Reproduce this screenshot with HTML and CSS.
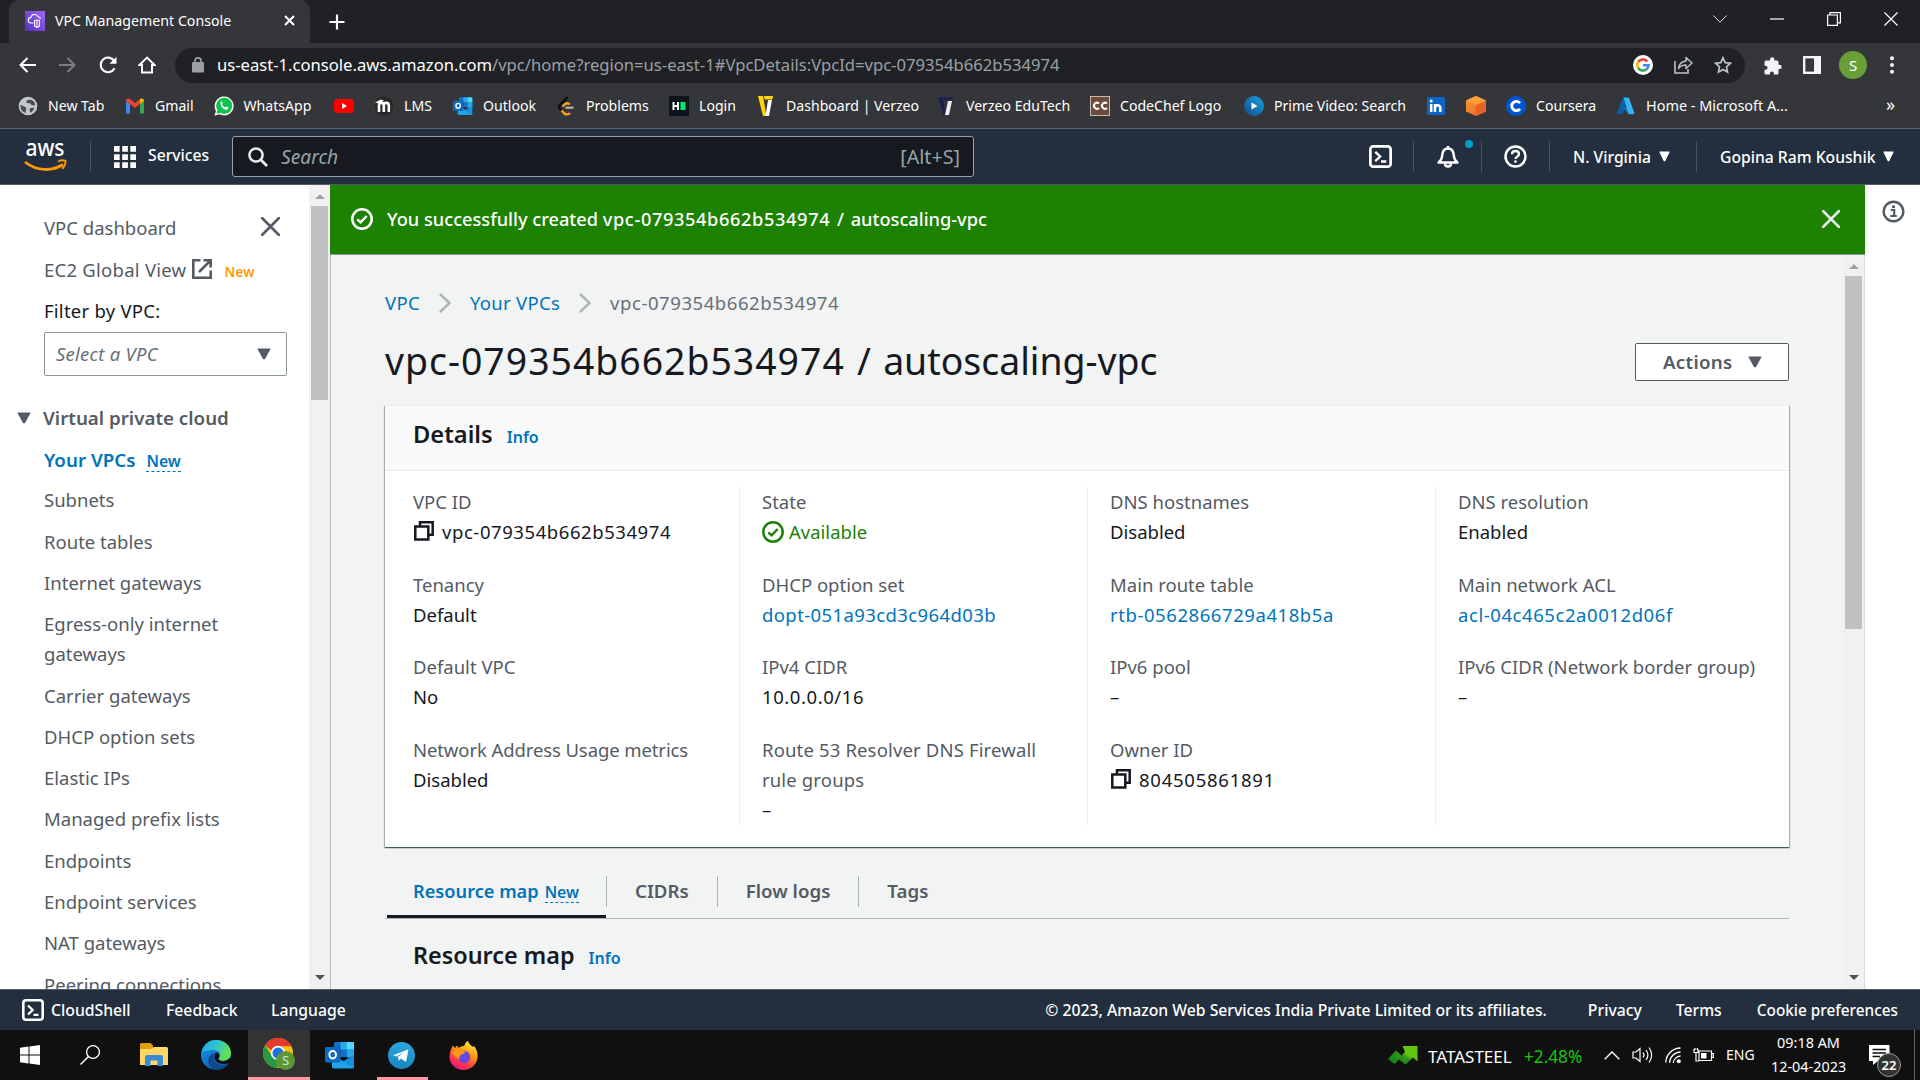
FILE: index.html
```html
<!DOCTYPE html>
<html lang="en">
<head>
<meta charset="utf-8">
<title>VPC Management Console</title>
<link rel="stylesheet" href="styles.css">
</head>
<body>
<svg class="defs" width="0" height="0">
  <defs>
    <linearGradient id="gPurple" x1="0" y1="1" x2="1" y2="0"><stop offset="0" stop-color="#5030b8"/><stop offset="1" stop-color="#a166ff"/></linearGradient>
    <linearGradient id="gEdge" x1="0" y1="0" x2="1" y2="0.3"><stop offset="0" stop-color="#1fa6ea"/><stop offset="0.55" stop-color="#2fc6c8"/><stop offset="1" stop-color="#66e04e"/></linearGradient>
    <linearGradient id="gEdge2" x1="0" y1="0" x2="0.6" y2="1"><stop offset="0" stop-color="#1b9be8"/><stop offset="1" stop-color="#0c5ac0"/></linearGradient>
    <linearGradient id="gFox" x1="0.8" y1="0" x2="0.3" y2="1"><stop offset="0" stop-color="#fff44f"/><stop offset="0.4" stop-color="#ff980e"/><stop offset="0.75" stop-color="#ff3647"/><stop offset="1" stop-color="#e31587"/></linearGradient>
    <linearGradient id="gTele" x1="0" y1="0" x2="0" y2="1"><stop offset="0" stop-color="#2aa6e0"/><stop offset="1" stop-color="#1a86c0"/></linearGradient>
    <linearGradient id="gCube" x1="0" y1="0" x2="1" y2="1"><stop offset="0" stop-color="#ff9a2e"/><stop offset="1" stop-color="#e8632a"/></linearGradient>
    <linearGradient id="gPrime" x1="1" y1="0" x2="0" y2="1"><stop offset="0" stop-color="#1aa3dc"/><stop offset="1" stop-color="#0c4d8c"/></linearGradient>
    <linearGradient id="gStock" x1="0" y1="1" x2="1" y2="0"><stop offset="0" stop-color="#0e7a1a"/><stop offset="0.5" stop-color="#2f9a1c"/><stop offset="0.6" stop-color="#62c610"/><stop offset="1" stop-color="#62c610"/></linearGradient>
    <symbol id="outlook" viewBox="0 0 30 28">
      <rect x="9" y="1" width="20" height="15" rx="1.500" fill="#1470c6"/><rect x="15.500" y="1" width="7" height="7.500" fill="#28a8ea"/><rect x="22" y="1" width="7" height="7.500" fill="#50d9ff"/><rect x="22" y="8.500" width="7" height="8" fill="#28a8ea"/><rect x="9" y="8.500" width="7" height="8" fill="#0a4a94"/>
      <path d="M7 14l11.500 6L29 14v12a1.500 1.500 0 0 1-1.500 1.500h-19A1.500 1.500 0 0 1 7 26z" fill="#1490df"/><path d="M7 14l22 13H8.500A1.500 1.500 0 0 1 7 26z" fill="#28a8ea" opacity=".75"/>
      <rect x="0" y="6" width="15.500" height="15.500" rx="1.500" fill="#0f6cbd"/><ellipse cx="7.700" cy="13.700" rx="3.300" ry="3.700" fill="none" stroke="#fff" stroke-width="2"/>
    </symbol>
    <symbol id="shell" viewBox="0 0 22 22"><rect x="1.300" y="1.300" width="19.400" height="19.400" rx="2.800" fill="none" stroke="#fff" stroke-width="2.600"/><path d="M6 6.500l4.700 4.500L6 15.500M11.500 15.800H16.500" fill="none" stroke="#fff" stroke-width="2.300"/></symbol>
    <symbol id="okay" viewBox="0 0 22 22"><circle cx="11" cy="11" r="9.700" fill="none" stroke="currentColor" stroke-width="2.500"/><path d="M6.300 11.300l3.300 3L15.700 8" fill="none" stroke="currentColor" stroke-width="2.500"/></symbol>
    <symbol id="copy" viewBox="0 0 20 20"><path d="M6 5.500V1.300h12.700v12.400H14.500" fill="none" stroke="#16191f" stroke-width="2.500"/><rect x="1.300" y="5.500" width="13" height="13" fill="none" stroke="#16191f" stroke-width="2.500"/></symbol>
    <symbol id="tri" viewBox="0 0 14 12"><path d="M1 .5h12a.5.5 0 0 1 .4.800L8.200 10.700a1.500 1.500 0 0 1-2.400 0L.6 1.300A.5.5 0 0 1 1 .5z" fill="currentColor"/></symbol>
    <symbol id="cross" viewBox="0 0 18 18"><path d="M1 1l16 16M17 1L1 17" fill="none" stroke="currentColor" stroke-width="2.500" stroke-linecap="round"/></symbol>
    <symbol id="sep" viewBox="0 0 12 20"><path d="M1 1l9.500 9L1 19" fill="none" stroke="#aab7b8" stroke-width="2.500"/></symbol>
  </defs>
</svg>

<header class="tabstrip">
  <div class="tab">
    <svg width="20" height="20" viewBox="0 0 20 20"><rect width="20" height="20" fill="url(#gPurple)"/><path d="M8.500 12H6.200a2.700 2.700 0 0 1-.4-5.400A3.800 3.800 0 0 1 13 5.700c1.500 0 2.300 1 2.400 2.200" fill="none" stroke="#fff" stroke-width="1.100"/><path d="M9.300 9.300h5.400M9.600 9.500v5.600l2.400 1.300 2.400-1.300V9.500M12 9.500v6" fill="none" stroke="#fff" stroke-width="1.100"/></svg>
    <span class="tab-title">VPC Management Console</span>
    <svg width="11" height="11" viewBox="0 0 11 11"><path d="M1 1l9 9M10 1l-9 9" stroke="#fff" stroke-width="2"/></svg>
  </div>
  <svg class="newtab" width="16" height="16" viewBox="0 0 16 16"><path d="M8 .5v15M.5 8h15" stroke="#fff" stroke-width="2.200"/></svg>
  <div class="win">
    <svg width="14" height="8" viewBox="0 0 14 8"><path d="M.5.5L7 7.200 13.500.5" fill="none" stroke="#ddd"/></svg>
    <svg width="14" height="2" viewBox="0 0 14 2"><path d="M0 1h14" stroke="#fff" stroke-width="1.200"/></svg>
    <svg width="14" height="14" viewBox="0 0 14 14"><path d="M.6 3h9.800v10.400H.6zM3 3V.6h10.400v10.200h-3" fill="none" stroke="#fff" stroke-width="1.200"/></svg>
    <svg width="14" height="14" viewBox="0 0 14 14"><path d="M.5.5l13 13M13.500.5l-13 13" stroke="#fff" stroke-width="1.200"/></svg>
  </div>
</header>

<nav class="toolbar">
  <svg width="17" height="16" viewBox="0 0 17 16"><path d="M17 8H1.500M8.500 1L1.500 8l7 7" fill="none" stroke="#fff" stroke-width="2"/></svg>
  <svg width="17" height="16" viewBox="0 0 17 16"><path d="M0 8h15.500M8.500 1l7 7-7 7" fill="none" stroke="#7b7d80" stroke-width="2"/></svg>
  <svg width="18" height="18" viewBox="0 0 18 18"><path d="M15.500 12.200A7.300 7.300 0 1 1 15.200 5" fill="none" stroke="#fff" stroke-width="2.100"/><path d="M17.500.8v7h-7z" fill="#fff"/></svg>
  <svg width="18" height="18" viewBox="0 0 18 18"><path d="M9 1.600L1.500 9H4v7.500h10V9h2.500z" fill="none" stroke="#fff" stroke-width="2"/></svg>
  <div class="omnibox">
    <svg class="lock" width="12" height="16" viewBox="0 0 12 16"><rect x="0" y="5" width="12" height="10.500" rx="1.200" fill="#9aa0a6"/><path d="M3 6V3.800a3 3 0 0 1 6 0V6" fill="none" stroke="#9aa0a6" stroke-width="1.700"/></svg>
    <span class="url"><b>us-east-1.console.aws.amazon.com</b>/vpc/home?region=us-east-1#VpcDetails:VpcId=vpc-079354b662b534974</span>
    <div class="omni-icons">
      <svg width="20" height="20" viewBox="0 0 20 20"><circle cx="10" cy="10" r="10" fill="#fff"/><g fill="none" stroke-width="2.600"><path d="M14.300 6.500A5.500 5.500 0 0 0 5.200 7.200" stroke="#ea4335"/><path d="M5.200 7.200a5.500 5.500 0 0 0 0 5.600" stroke="#fbbc05"/><path d="M5.200 12.800a5.500 5.500 0 0 0 8.300 1.400" stroke="#34a853"/><path d="M13.500 14.200a5.500 5.500 0 0 0 2-4H10" stroke="#4285f4"/></g></svg>
      <svg width="19" height="18" viewBox="0 0 19 18"><path d="M1 5v12h13v-4" fill="none" stroke="#bdc1c6" stroke-width="1.600"/><path d="M4.500 12.500c.5-4.500 3-7 7.500-7.500V1.500l6 5.500-6 5.500V9c-3.500 0-5.800 1-7.500 3.500z" fill="none" stroke="#bdc1c6" stroke-width="1.500" stroke-linejoin="round"/></svg>
      <svg width="18" height="18" viewBox="0 0 18 18"><path d="M9 1.800l2.200 4.800 5.200.6-3.900 3.600 1 5.200L9 13.400 4.500 16l1-5.200L1.600 7.200l5.200-.6z" fill="none" stroke="#bdc1c6" stroke-width="1.700"/></svg>
    </div>
  </div>
  <svg width="19" height="19" viewBox="0 0 19 19"><path d="M7 3.500a2.200 2.200 0 0 1 4.400 0V4.500H14A1.500 1.500 0 0 1 15.500 6v2.700h1a2.200 2.200 0 0 1 0 4.400h-1V17a1.500 1.500 0 0 1-1.500 1.500h-3.100v-1a2 2 0 0 0-4 0v1H3A1.500 1.500 0 0 1 1.500 17v-3.200h1a2 2 0 0 0 0-4h-1V6A1.500 1.500 0 0 1 3 4.500h4z" fill="#f1f3f4"/></svg>
  <svg width="18" height="18" viewBox="0 0 18 18"><rect x="1.200" y="1.200" width="15.600" height="15.600" fill="none" stroke="#f1f3f4" stroke-width="2.400"/><rect x="11" y="1" width="6" height="16" fill="#f1f3f4"/></svg>
  <span class="avatar">S</span>
  <svg width="4" height="18" viewBox="0 0 4 18" fill="#f1f3f4"><circle cx="2" cy="2.200" r="2"/><circle cx="2" cy="9" r="2"/><circle cx="2" cy="15.800" r="2"/></svg>
</nav>

<nav class="bookmarks">
  <a><svg width="20" height="20" viewBox="0 0 20 20"><circle cx="10" cy="10" r="9.300" fill="#c4c7cb"/><path d="M2.500 8.500c2 2 4.500 1.500 5.500 3.300.8 1.600-.8 2.200 0 5.200-3.500-.7-6-4-5.500-8.500zM11 3.500l-3 1.700 1 2 2.500-.3 2.500 2.300h3.200c-.2-3.200-2.500-5.500-6.200-5.700zM11.500 12.500l4.700-1c-.3 2.500-1.800 4.500-4 5.300z" fill="#4a4d51"/></svg>New Tab</a>
  <a><svg width="20" height="20" viewBox="0 0 20 20"><path d="M1 17.500V5l4 3v9.500z" fill="#4285f4"/><path d="M15 17.500V8l4-3v12.500z" fill="#34a853"/><path d="M1 5c0-2.500 2.500-3 4-2l5 4 5-4v5l-5 4-5-4-4-3z" fill="#ea4335"/><path d="M15 3c1.500-1 4-.5 4 2l-4 3z" fill="#fbbc04"/></svg>Gmail</a>
  <a><svg width="20" height="20" viewBox="0 0 20 20"><path d="M.5 19.700l1.400-5A9.500 9.500 0 1 1 5.600 18.300z" fill="#fff"/><path d="M2.500 17.700l1-3.600a8 8 0 1 1 2.700 2.600z" fill="#0fc24c"/><path d="M6.700 5.500c.8-.6 1.300-.2 1.500.4l.6 1.400-.8 1.300c.7 1.400 1.600 2.200 3 2.800l1.200-1 1.900.9c.5.400 0 1.700-.8 2.200-3 1.300-8-3.600-6.600-8z" fill="#fff"/></svg>WhatsApp</a>
  <a><svg width="20" height="20" viewBox="0 0 20 20"><rect y="3" width="20" height="14" rx="3.500" fill="#f00"/><path d="M8 7l5 3-5 3z" fill="#fff"/></svg></a>
  <a><svg width="20" height="20" viewBox="0 0 20 20"><circle cx="10" cy="10" r="9.500" fill="#2b2725"/><path d="M5 16V9.500c0-3.500 4.800-3.500 4.800 0V16M9.800 9.500c0-3.500 5-3.500 5 0V16" fill="none" stroke="#fff" stroke-width="2.600"/><path d="M1 6.500L7 3.500l3 1.200-5 2.800z" fill="#fff"/></svg>LMS</a>
  <a><svg width="20" height="20"><use href="#outlook"/></svg>Outlook</a>
  <a><svg width="20" height="20" viewBox="0 0 20 20"><path d="M11.500 1L4 9c-1.200 1.300-1.200 2.800 0 4l3 3" fill="none" stroke="#0b0b0b" stroke-width="2.400"/><path d="M13.500 8.500c-1.500-1.700-3.500-1.700-5 0L6.500 10.500M5.500 14.500L8.500 17.500c1.500 1.300 4 1.300 5.500-.5" fill="none" stroke="#ffa116" stroke-width="2.400"/><path d="M9.500 11.700h8" stroke="#b3b3b3" stroke-width="2.200"/></svg>Problems</a>
  <a><svg width="20" height="20" viewBox="0 0 20 20"><rect width="20" height="20" fill="#0e141e"/><path d="M4.500 6v8M9 6v8M4 10h5" stroke="#fff" stroke-width="2"/><rect x="11.500" y="6" width="5" height="8" fill="#00ea64"/></svg>Login</a>
  <a><svg width="20" height="20" viewBox="0 0 20 20"><path d="M2 0h5l3.500 20H7z" fill="#ffd400"/><path d="M8 0h9l-.6 3.500H8.500z" fill="#ffd400"/><path d="M12 4h4l-3 16H9.500z" fill="#fff"/></svg>Dashboard | Verzeo</a>
  <a><svg width="20" height="20" viewBox="0 0 20 20"><path d="M2 1h5l3 18H7.500z" fill="#1d2250"/><path d="M8 1h9l-.6 3.500H8.500z" fill="#1d2250"/><path d="M12 5h4l-3 14H9z" fill="#f1f1f5"/></svg>Verzeo EduTech</a>
  <a><svg width="20" height="20" viewBox="0 0 20 20"><rect x=".5" y=".5" width="19" height="19" fill="#6b4c3b" stroke="#cbb9ab"/><path d="M9 7.500a3 3 0 1 0 0 4.500M17 7.500a3 3 0 1 0 0 4.500" fill="none" stroke="#fff" stroke-width="2"/></svg>CodeChef Logo</a>
  <a><svg width="20" height="20" viewBox="0 0 20 20"><circle cx="10" cy="10" r="10" fill="url(#gPrime)"/><path d="M7.500 6.500l6 3.500-6 3.500z" fill="#fff"/></svg>Prime Video: Search</a>
  <a><svg width="20" height="20" viewBox="0 0 20 20"><rect x="1" y="1" width="18" height="18" rx="1" fill="#0a66c2"/><path d="M5.200 8v8M9 8v8M9 12c0-3.500 5.300-4 5.300 0v4" fill="none" stroke="#fff" stroke-width="2.500"/><circle cx="5.200" cy="5" r="1.500" fill="#fff"/></svg></a>
  <a><svg width="20" height="20" viewBox="0 0 20 20"><path d="M10 0l10 4.500v11L10 20 0 15.500v-11z" fill="url(#gCube)"/><path d="M10 9l10-4.500v11L10 20z" fill="#e8632a"/><path d="M10 0l10 4.500L10 9 0 4.500z" fill="#ff9e36"/></svg></a>
  <a><svg width="20" height="20" viewBox="0 0 20 20"><circle cx="10" cy="10" r="10" fill="#0056d2"/><path d="M14 7.200a4.600 4.600 0 1 0 0 5.600" fill="none" stroke="#fff" stroke-width="2.900"/></svg>Coursera</a>
  <a class="azure"><svg width="20" height="20" viewBox="0 0 20 20"><path d="M7 1.500h5L6.500 18H2.200A1 1 0 0 1 1 16.500z" fill="#0f5ea8"/><path d="M7 11.500h8v6.700h-2z" fill="#0a78d4"/><path d="M7.500 1.500H12c.7 0 1 .5 1.200 1l5 14c.3 1-.2 1.700-1 1.700H12.700z" fill="#35b3ee"/></svg>Home - Microsoft A...</a>
  <a class="more">»</a>
</nav>

<header class="aws">
  <svg class="logo" width="44" height="38" viewBox="0 -4 44 38"><text class="logo-text" x="1.500" y="16" textLength="39" lengthAdjust="spacingAndGlyphs">aws</text><path d="M1 22c12 9.500 27 9.500 38 2.500" fill="none" stroke="#f90" stroke-width="2.800"/><path d="M34 21.500c3-1.500 6-1.300 7.500-.7.300 3-1.200 6-3.500 8" fill="none" stroke="#f90" stroke-width="1.900"/></svg>
  <i class="rule"></i>
  <svg class="grid9" width="22" height="22" viewBox="0 0 22 22" fill="#fff"><path d="M0 0h5.700v5.700H0zM8.200 0h5.700v5.700H8.200zM16.300 0H22v5.700h-5.700zM0 8.200h5.700v5.700H0zM8.200 8.200h5.700v5.700H8.200zM16.300 8.200H22v5.700h-5.700zM0 16.300h5.700V22H0zM8.200 16.300h5.700V22H8.200zM16.300 16.300H22V22h-5.700z"/></svg>
  <span class="services">Services</span>
  <div class="search">
    <svg width="20" height="20" viewBox="0 0 20 20"><circle cx="8" cy="8" r="6.600" fill="none" stroke="#eaeded" stroke-width="2.500"/><path d="M12.800 12.800L19 19" stroke="#eaeded" stroke-width="2.800"/></svg>
    <em>Search</em><span>[Alt+S]</span>
  </div>
  <div class="aws-right">
    <a class="c1"><svg width="23" height="23"><use href="#shell"/></svg></a>
    <a class="c2"><svg width="24" height="24" viewBox="0 0 24 24"><path d="M2.500 17.500c3-2.500 3.500-4 3.700-7C6.500 6 9 3.500 12 3.500S17.500 6 17.800 10.500c.2 3 .7 4.500 3.700 7z" fill="none" stroke="#fff" stroke-width="2.400" stroke-linejoin="round"/><path d="M12 1v3M9 18.500c0 4 6 4 6 0" fill="none" stroke="#fff" stroke-width="2.400"/></svg><i class="dot"></i></a>
    <a class="c3"><svg width="23" height="23" viewBox="0 0 23 23"><circle cx="11.500" cy="11.500" r="10" fill="none" stroke="#fff" stroke-width="2.500"/><path d="M8 9.200c0-4.300 7-4.300 7 0 0 2.300-3.500 2.300-3.500 4.800" fill="none" stroke="#fff" stroke-width="2.300"/><circle cx="11.500" cy="16.600" r="1.400" fill="#fff"/></svg></a>
    <a class="c4">N. Virginia<svg width="11" height="11" viewBox="0 0 14 12" preserveAspectRatio="none"><use href="#tri"/></svg></a>
    <a class="c5">Gopina Ram Koushik<svg width="11" height="11" viewBox="0 0 14 12" preserveAspectRatio="none"><use href="#tri"/></svg></a>
  </div>
</header>

<div class="workspace">
  <aside class="side">
    <div class="side-body">
      <a class="row">VPC dashboard<svg class="close" width="19" height="19"><use href="#cross"/></svg></a>
      <a class="global">EC2 Global View<svg class="ext" width="20" height="20" viewBox="0 0 20 20"><path d="M8.500 1.300H1.300v17.400h17.400V11.500" fill="none" stroke="#545b64" stroke-width="2.600"/><path d="M11.500 1.300h7.200v7.200M18.500 1.500L7 13" fill="none" stroke="#545b64" stroke-width="2.600"/></svg><b class="new-o">New</b></a>
      <div class="filter">Filter by VPC:</div>
      <div class="select"><em>Select a VPC</em><svg width="14" height="12"><use href="#tri"/></svg></div>
      <div class="group"><svg width="14" height="12"><use href="#tri"/></svg>Virtual private cloud</div>
      <a class="current">Your VPCs<span class="new-b">New</span></a>
      <a>Subnets</a>
      <a>Route tables</a>
      <a>Internet gateways</a>
      <a>Egress-only internet gateways</a>
      <a>Carrier gateways</a>
      <a>DHCP option sets</a>
      <a>Elastic IPs</a>
      <a>Managed prefix lists</a>
      <a>Endpoints</a>
      <a>Endpoint services</a>
      <a>NAT gateways</a>
      <a>Peering connections</a>
    </div>
    <div class="scroll"><i class="up"></i><i class="thumb t1"></i><i class="down"></i></div>
  </aside>

  <main class="main">
    <div class="flash"><svg width="22" height="22"><use href="#okay"/></svg><p>You successfully created <span class="id">vpc-079354b662b534974</span><span class="tail"> / autoscaling-vpc</span></p><svg class="flash-x" width="18" height="18"><use href="#cross"/></svg></div>
    <div class="main-scroll">
      <div class="content">
        <div class="crumbs"><a>VPC</a><svg width="12" height="20"><use href="#sep"/></svg><a>Your VPCs</a><svg width="12" height="20"><use href="#sep"/></svg><span class="id">vpc-079354b662b534974</span></div>
        <div class="head"><h1><span>vpc-079354b662b534974</span> / autoscaling-vpc</h1><button class="actions">Actions<svg width="14" height="12"><use href="#tri"/></svg></button></div>
        <section class="card">
          <div class="card-head"><h2>Details</h2><a class="info">Info</a></div>
          <div class="cols">
            <dl>
              <div><dt>VPC ID</dt><dd class="id"><svg width="20" height="20"><use href="#copy"/></svg>vpc-079354b662b534974</dd></div>
              <div><dt>Tenancy</dt><dd>Default</dd></div>
              <div><dt>Default VPC</dt><dd>No</dd></div>
              <div><dt class="snug">Network Address Usage metrics</dt><dd>Disabled</dd></div>
            </dl>
            <dl>
              <div><dt>State</dt><dd class="ok"><svg width="22" height="22"><use href="#okay"/></svg>Available</dd></div>
              <div><dt>DHCP option set</dt><dd class="id dopt"><a>dopt-051a93cd3c964d03b</a></dd></div>
              <div><dt>IPv4 CIDR</dt><dd class="id">10.0.0.0/16</dd></div>
              <div><dt class="loose">Route 53 Resolver DNS Firewall<br>rule groups</dt><dd>–</dd></div>
            </dl>
            <dl>
              <div><dt>DNS hostnames</dt><dd>Disabled</dd></div>
              <div><dt>Main route table</dt><dd class="id"><a>rtb-0562866729a418b5a</a></dd></div>
              <div><dt>IPv6 pool</dt><dd>–</dd></div>
              <div><dt>Owner ID</dt><dd class="id owner"><svg width="20" height="20"><use href="#copy"/></svg>804505861891</dd></div>
            </dl>
            <dl>
              <div><dt>DNS resolution</dt><dd>Enabled</dd></div>
              <div><dt>Main network ACL</dt><dd class="id"><a>acl-04c465c2a0012d06f</a></dd></div>
              <div><dt>IPv6 CIDR (Network border group)</dt><dd>–</dd></div>
            </dl>
          </div>
        </section>
        <div class="tabs">
          <a class="on">Resource map<span class="new-b">New</span></a><a>CIDRs</a><a>Flow logs</a><a>Tags</a>
        </div>
        <div class="map-head"><h2>Resource map</h2><a class="info">Info</a></div>
      </div>
      <div class="scroll"><i class="up"></i><i class="thumb t2"></i><i class="down"></i></div>
    </div>
  </main>

  <aside class="help"><svg width="23" height="23" viewBox="0 0 23 23"><circle cx="11.500" cy="11.500" r="9.800" fill="none" stroke="#545b64" stroke-width="2.400"/><path d="M8.700 10h3.500v5.500M8.300 16h6.500" fill="none" stroke="#545b64" stroke-width="2.200"/><rect x="10" y="5.500" width="3" height="2.600" fill="#545b64"/></svg></aside>
</div>

<footer class="foot">
  <svg width="22" height="22"><use href="#shell"/></svg>
  <span class="f1">CloudShell</span><span class="f2">Feedback</span><span class="f3">Language</span>
  <span class="copyr">© 2023, Amazon Web Services India Private Limited or its affiliates.</span>
  <span class="f4">Privacy</span><span class="f5">Terms</span><span class="f6">Cookie preferences</span>
</footer>

<div class="taskbar">
  <span class="task"><svg width="20" height="20" viewBox="0 0 20 20" fill="#fff"><path d="M0 2.800L8.500 1.600V9.500H0zM9.500 1.500L20 0v9.500H9.500zM0 10.500h8.500v7.900L0 17.200zM9.500 10.500H20V20L9.500 18.500z"/></svg></span>
  <span class="task"><svg width="20" height="20" viewBox="0 0 20 20"><circle cx="13" cy="7" r="6.400" fill="none" stroke="#fff" stroke-width="1.300"/><path d="M8.500 11.500L.5 19.500" stroke="#fff" stroke-width="1.400"/></svg></span>
  <span class="task"><svg width="28" height="24" viewBox="0 0 28 24"><path d="M0 1.500A1.500 1.500 0 0 1 1.500 0h9L13 2.500V8H0z" fill="#e09f00"/><path d="M0 6h11l3-2h12.500A1.500 1.500 0 0 1 28 5.500V22H0z" fill="#ffd766"/><path d="M5 23v-9a2 2 0 0 1 2-2h14a2 2 0 0 1 2 2v9h-5.500v-5.500h-7V23z" fill="#3a8ad8"/></svg></span>
  <span class="task"><svg width="30" height="30" viewBox="0 0 30 30"><circle cx="15" cy="15" r="15" fill="url(#gEdge2)"/><path d="M.5 12.500C2 4.500 8.500 0 15 0c9 0 15 6 15 13 0 5-3.500 8-8 8-3.500 0-5.500-1.500-4-3.500 3-4-1-8-6-7.500C6.500 10 2 12 .5 12.500z" fill="url(#gEdge)"/><path d="M15 30c-5.500-1-8.500-6-7.500-11 .7-3.300 3.500-5.500 6.500-6.500-3 4.500-1 12 7 12.500 3 .2 5-.8 6.500-1.800C25.500 27 21 30.500 15 30z" fill="#114a8b"/><path d="M15.500 12.500c2.800.7 3.700 3 2.500 5-1.500 2 .5 3.500 4 3.500 2.500 0 5-1 6.500-3l2 1-1.500 4.500h-1.800c-7 1.500-14.200-.7-13.700-7.200.1-1.700.8-3 2-3.800z" fill="#101010"/></svg></span>
  <span class="task active"><svg width="32" height="32" viewBox="0 0 32 32"><circle cx="15" cy="15" r="15" fill="#fbc116"/><path d="M2 7.500A15 15 0 0 1 28.500 8.300H15a7 7 0 0 0-6.500 4.200z" fill="#e33b2e"/><path d="M2 7.500A15 15 0 0 0 14 30l6.500-11-11-.5z" fill="#249a41"/><circle cx="15" cy="15" r="7.200" fill="#fff"/><circle cx="15" cy="15" r="5.500" fill="#1a73e8"/><circle cx="22.500" cy="22.500" r="9.500" fill="#5d9634"/><text class="s-badge" x="22.500" y="27" text-anchor="middle">S</text></svg></span>
  <span class="task"><svg width="30" height="28"><use href="#outlook"/></svg></span>
  <span class="task under"><svg width="27" height="27" viewBox="0 0 27 27"><circle cx="13.500" cy="13.500" r="13.500" fill="url(#gTele)"/><path d="M5 13.300L20.500 7.200 18 20l-5-3.500-2.300 2.300-.7-4 6.500-5.300-8 5z" fill="#fff"/></svg></span>
  <span class="task"><svg width="29" height="29" viewBox="0 0 29 29"><path d="M15.500 4.500C16 2 17.500.5 19 0c.5 3 3 4.500 5 6l1-1c3 3.500 4 7.500 3.500 12C27.500 24 21.500 29 14.500 29 6.500 29 .5 23 .5 15.500c0-4 1.500-7.500 3.500-11L6 7l2-2.500L9.500 7c2-1.500 4-2 6-2.500z" fill="url(#gFox)"/><circle cx="15" cy="16" r="6.200" fill="#6b46e0"/><path d="M2.500 12c3-3 6.500-4 9.500-3l4.500 2c-1 2-4 2-5.500 3.500-1 1.500-.5 2.500 0 4C7.500 17 5 14 2.500 12z" fill="#ff9a1a"/></svg></span>
  <div class="tray">
    <svg width="30" height="20" viewBox="0 0 30 20"><path d="M0 14l8-8.500 5.500 5L17 7l-2.500-6H29.500v15.500l-4.500-4-7.500 7-6.500-5-4.500 4.500z" fill="url(#gStock)"/></svg>
    <span class="tata">TATASTEEL</span><span class="pct">+2.48%</span>
    <svg class="y1" width="16" height="9" viewBox="0 0 16 9"><path d="M.7 8.300L8 1l7.300 7.300" fill="none" stroke="#fff" stroke-width="1.400"/></svg>
    <svg class="y2" width="21" height="18" viewBox="0 0 21 18"><path d="M1 6h3l4-3.500v13L4 12H1zM11 6.500c1.200 1.500 1.200 3.500 0 5M14 4c2.300 3 2.300 7 0 10M17 1.500c3.500 4.500 3.500 10.500 0 15" fill="none" stroke="#fff" stroke-width="1.200"/></svg>
    <svg class="y3" width="17" height="17" viewBox="0 0 17 17"><path d="M.8 15.500A15 15 0 0 1 15.500 1M4.500 15.800A11.300 11.300 0 0 1 15.500 5M8.300 16A7.500 7.500 0 0 1 15.500 9" fill="none" stroke="#fff" stroke-width="1.300"/><circle cx="13.800" cy="14.300" r="2" fill="#fff"/></svg>
    <svg class="y4" width="21" height="15" viewBox="0 0 21 15"><path d="M6 3h12.500v9.500H6zM18.500 5.500h1.800v4h-1.800M1 1v3.500h4V1M2 0v2M4.300 0v2M3 5v8h3" fill="none" stroke="#fff" stroke-width="1.200"/><rect x="8" y="5" width="5.500" height="5.500" fill="#fff"/></svg>
    <span class="eng">ENG</span>
    <span class="clock">09:18 AM<br>12-04-2023</span>
    <span class="note"><svg width="21" height="20" viewBox="0 0 21 20"><path d="M0 0h20.500v16H9l-5 4v-4H0z" fill="#fff"/><path d="M3.500 4.500H17M3.500 8H17M3.500 11.500H11" stroke="#111" stroke-width="1.300"/></svg><b>22</b></span>
  </div>
</div>
</body>
</html>
```
FILE: styles.css
```css
* { box-sizing: border-box; }
body {
  margin: 0;
  width: 1920px;
  height: 1080px;
  overflow: hidden;
  display: grid;
  grid-template-rows: 43px 44px 42px 56px 804px 41px 50px;
  font-family: "Noto Sans", "Open Sans", sans-serif;
  font-size: 18.5px;
  line-height: 30px;
  color: #16191f;
}
svg { display: block; flex: none; }
.defs { position: absolute; }
h1, h2, p, dl, dd, dt { margin: 0; font-weight: 400; }

/* Browser tabs */
.tabstrip { background: #202124; display: flex; align-items: center; padding-left: 9px; color: #fff; }
.tab { width: 301px; height: 43px; background: #35363a; border-radius: 10px 10px 0 0; display: flex; align-items: center; padding: 0 15px 2px 16px; }
.tab-title { font-size: 14.2px; margin-left: 10px; flex: 1; }
.newtab { margin-left: 19px; }
.win { margin-left: auto; display: flex; align-items: center; gap: 43px; padding: 0 22px 6px 0; }

/* Navigation bar */
.toolbar { background: #35363a; display: grid; grid-template-columns: 40px 40px 39px 37px 1588px 40px 36px 51px 4px; align-items: center; padding-left: 19px; }
.omnibox { height: 35px; width: 1570px; border-radius: 18px; background: #202124; display: flex; align-items: center; padding: 0 13px 0 17px; }
.url { margin-left: 13px; font-size: 16.63px; color: #9aa0a6; white-space: nowrap; }
.url b { font-weight: 400; color: #fff; }
.omni-icons { margin-left: auto; display: flex; gap: 21px; align-items: center; }
.avatar { width: 28px; height: 28px; border-radius: 50%; background: #689f38; color: #fff; font-size: 15px; line-height: 28px; text-align: center; }

/* Bookmarks bar */
.bookmarks { background: #35363a; border-bottom: 1px solid #5f6368; display: grid; grid-template-columns: 107px 88.5px 120.5px 40px 79px 103px 113px 87px 180px 154px 154px 182px 40px 40px 110px 270px 20px; padding: 0 0 4px 18px; align-items: center; color: #fff; font-size: 14.1px; white-space: nowrap; line-height: 20px; }
.bookmarks a { display: flex; align-items: center; gap: 10px; }
.bookmarks .azure { font-size: 14.45px; }
.bookmarks .more { font-size: 18px; padding-bottom: 4px; }

/* Console header */
.aws { background: #232f3e; border-bottom: 1px solid #545b64; display: flex; align-items: center; color: #fff; font-weight: 500; font-size: 15.7px; }
.logo { margin: -4px 0 0 24px; overflow: visible; }
.logo-text { font: 500 24px "Noto Sans", sans-serif; fill: #fff; }
.rule { width: 1px; height: 31px; background: #47525f; margin-left: 22px; }
.grid9 { margin-left: 23px; }
.services { margin: 0 0 3px 12px; width: 84px; }
.search { width: 742px; height: 41px; border: 1px solid #95a5a6; border-radius: 3px; background: #161920; display: flex; align-items: center; gap: 13px; padding: 0 13px 0 15px; font-size: 19.2px; font-weight: 400; color: #95a5a6; }
.search span { margin-left: auto; font-size: 19.7px; }
.aws-right { margin-left: auto; display: grid; grid-template-columns: 67px 68px 68px 147px 224px; align-items: center; }
.aws-right a { height: 31px; display: flex; align-items: center; border-left: 1px solid #47525f; position: relative; }
.aws-right .c1 { border: 0; padding-left: 23px; }
.c2, .c3 { padding-left: 22px; }
.c4 { padding-left: 23px; gap: 8px; }
.c5 { padding-left: 23px; gap: 8px; }
.dot { position: absolute; left: 51px; top: -1px; width: 8px; height: 8px; border-radius: 50%; background: #00a1c9; }

/* Side navigation */
.workspace { display: grid; grid-template-columns: 330px 1535px 55px; min-height: 0; }
.side { background: #fff; display: flex; overflow: hidden; min-height: 0; }
.side-body { width: 309px; padding: 28px 22px 0 44px; color: #545b64; overflow: hidden; }
.side-body a { display: block; margin-bottom: 11.3px; padding-right: 20px; }
.side-body .row { display: flex; justify-content: space-between; padding-right: 7px; margin-bottom: 10.5px; }
.side-body .global { display: flex; align-items: center; letter-spacing: 0.25px; padding: 0; }
.close { margin-top: 4px; }
.ext { margin: -2px 0 0 6px; }
.new-o { color: #ff9900; font-size: 13.6px; font-weight: 600; margin: 3px 0 0 12px; }
.filter { color: #16191f; letter-spacing: 0.25px; margin-top: -13px; padding-top: 0; }
.side-body .global + .filter { margin-top: -2px; }
.select { height: 44px; margin: 6px 0 27px; border: 1px solid #879596; border-radius: 2px; display: flex; align-items: center; justify-content: space-between; padding: 0 15px 0 11px; white-space: nowrap; letter-spacing: 0.25px; }
.select em { color: #687078; }
.group { font-weight: 600; font-size: 18.75px; margin: 0 0 12px -27px; display: flex; align-items: center; gap: 12px; white-space: nowrap; }
.side-body .current { color: #0073bb; font-weight: 600; font-size: 18.75px; margin-bottom: 10.6px; }
.new-b { color: #0073bb; font-size: 15.7px; font-weight: 600; line-height: 20px; margin-left: 11px; border-bottom: 1px dashed #0073bb; display: inline-block; }

.scroll { width: 21px; background: #f1f1f1; display: flex; flex-direction: column; align-items: center; padding: 9px 0 9px; }
.up, .down { border: 5px solid transparent; height: 0; width: 0; }
.up { border-top: 0; border-bottom-color: #a3a3a3; }
.down { border-bottom: 0; border-top-color: #505050; margin-top: auto; }
.thumb { width: 17px; background: #c1c1c1; margin-top: 7px; }
.t1 { height: 194px; }
.t2 { height: 353px; }

/* Main panel */
.main { background: #f2f3f3; display: flex; flex-direction: column; min-height: 0; overflow: hidden; }
.flash { height: 70px; flex: none; background: #1d8102; color: #fff; border-bottom: 1px solid #879596; display: flex; align-items: center; padding: 0 25px 1px 21px; font-size: 18.2px; gap: 14px; }
.flash p { font-weight: 500; white-space: pre; }
.flash .id { letter-spacing: 0.63px; }
.tail { word-spacing: 2px; }
.flash-x { margin-left: auto; color: #e9ebed; }
.main-scroll { display: flex; flex: 1; min-height: 0; border-left: 1px solid #b5bcbe; border-right: 1px solid #d5dbdb; }
.content { flex: 1; padding: 33px 54px 0 54px; overflow: hidden; }
.content a { color: #0073bb; }
.crumbs { display: flex; align-items: center; color: #687078; }
.crumbs a { letter-spacing: 0.3px; }
.crumbs svg { margin: 0 19px 0 19px; }
.id { letter-spacing: 0.57px; }
.dopt { letter-spacing: 0.4px; }
.owner { letter-spacing: 0.75px; }
.head { display: flex; justify-content: space-between; align-items: center; height: 50px; margin-top: 19px; }
h1 { font-size: 37.4px; line-height: 50px; white-space: nowrap; word-spacing: 2.5px; margin-top: -3px; }
h1 span { letter-spacing: 1px; }
.actions { width: 154px; height: 38px; border: 1px solid #545b64; border-radius: 2px; background: #fff; font: 600 18.7px "Noto Sans", sans-serif; letter-spacing: 0.3px; color: #545b64; display: flex; align-items: center; gap: 15px; padding: 0 0 1px 27px; }
.card { margin-top: 18px; height: 442px; background: #fff; border-top: 1px solid #eaeded; box-shadow: 0 1px 1px 0 rgba(0,28,36,.5), 1px 1px 1px 0 rgba(0,28,36,.25), -1px 1px 1px 0 rgba(0,28,36,.25); }
.card-head, .map-head { display: flex; align-items: baseline; gap: 14px; padding: 13px 28px 0; }
.card-head { height: 65px; background: #fafafa; border-bottom: 1px solid #eaeded; }
h2 { font-size: 23.4px; font-weight: 600; }
.card-head h2 { font-size: 23.7px; }
.info { font-size: 16px; font-weight: 600; }
.cols { display: grid; grid-template-columns: 354px 348px 348px 1fr; padding: 16px 0 0; height: 355px; }
dl { border-left: 1px solid #eaeded; padding-left: 22px; display: flex; flex-direction: column; gap: 22.5px; white-space: nowrap; height: 338px; }
dl:first-child { border: 0; padding-left: 28px; }
dt { color: #545b64; }
.snug { letter-spacing: -0.1px; }
.loose { letter-spacing: 0.15px; }
dd { display: flex; align-items: center; }
dd svg { margin: -2px 8px 0 1px; }
.ok { color: #1d8102; }
.ok svg { margin: 0 5px 0 0; }
.tabs { margin-top: 21px; height: 51px; border-bottom: 1px solid #aab7b8; display: flex; padding-left: 2px; font-weight: 600; font-size: 18.7px; }
.tabs a { height: 31px; margin-top: 8px; padding: 0 28px 0 28px; border-left: 1px solid #aab7b8; color: #545b64; white-space: nowrap; }
.tabs .on { height: 50px; width: 219px; font-size: 18.2px; margin-top: 0; padding: 8px 0 0 26px; border-left: 0; border-bottom: 3px solid #16191f; color: #0073bb; }
.tabs .new-b { margin-left: 6px; }
.map-head { padding-top: 21px; }
.help { background: #fff; padding: 15px 0 0 17px; }

/* Console footer */
.foot { background: #232f3e; border-top: 1px solid #545b64; color: #fff; display: flex; align-items: center; padding: 0 22px; font-size: 15.75px; font-weight: 500; white-space: nowrap; }
.f1 { margin-left: 7px; width: 115px; }
.f2 { width: 105px; }
.copyr { margin-left: auto; }
.f4 { margin-left: 41px; }
.f5 { margin-left: 34px; }
.f6 { margin-left: 35px; font-size: 15.35px; }

/* Taskbar */
.taskbar { background: #101010; color: #fff; display: flex; }
.task { width: 62px; display: flex; align-items: center; justify-content: center; height: 50px; }
.task:first-child { width: 60px; }
.task:nth-child(2) { width: 60px; }
.task:nth-child(3) { width: 66px; padding-left: 2px; }
.task:nth-child(4) { padding-right: 2px; }
.active { background: #333; border-bottom: 3px solid #ff99a4; }
.under { border-bottom: 3px solid #ff99a4; width: 51px; margin: 0 5px; padding: 3px 2px 0 0; }
.task:nth-child(6), .task:nth-child(8) { padding-right: 2px; }
.s-badge { font: 13px "Noto Sans", sans-serif; fill: #d9e6cf; }
.tray { margin-left: auto; display: flex; align-items: center; white-space: nowrap; }
.tata { font-size: 17px; width: 96px; margin-left: 10px; padding-top: 3px; }
.pct { font-size: 17.2px; color: #16c60c; width: 80px; padding-top: 3px; }
.y2 { margin-left: 12px; }
.y3 { margin-left: 12px; }
.y4 { margin-left: 11px; }
.eng { font-size: 14px; width: 45px; margin-left: 12px; }
.clock { font-size: 14.4px; line-height: 24px; text-align: center; width: 75px; }
.note { margin-left: 23px; width: 46px; height: 50px; border-right: 1px solid #666; position: relative; padding-top: 15px; }
.note b { position: absolute; left: 8px; top: 23px; width: 24px; height: 24px; border-radius: 50%; border: 1px solid #999; background: #333; font-size: 13px; font-weight: 600; line-height: 22px; text-align: center; }
.tray::after { content: ""; width: 5px; }
```
